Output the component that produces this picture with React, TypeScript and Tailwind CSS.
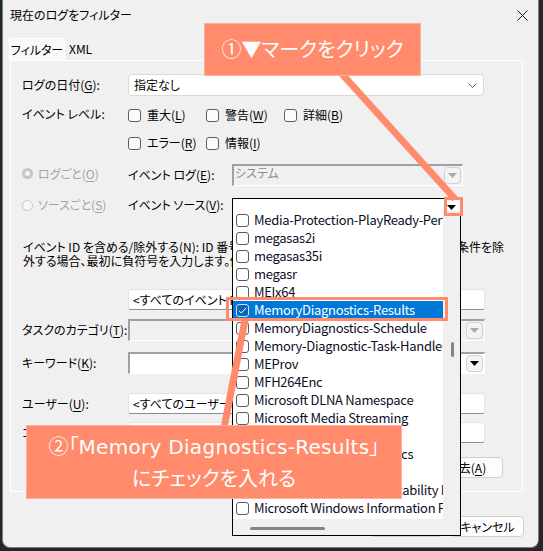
import React from "react";

const JP = "font-['Noto_Sans_CJK_JP',sans-serif] [font-feature-settings:'palt']";
const CALLOUT = "font-['Noto_Sans','Noto_Sans_CJK_JP',sans-serif] [font-feature-settings:'palt']";

function U({ c }: { c: string }) {
  return <span className="underline decoration-1 underline-offset-[2px]">{c}</span>;
}

function Box() {
  return <span className="block w-[13px] h-[13px] shrink-0 rounded-[3px] border border-[#5e5e5e] bg-[#fbfbfb]" />;
}

function Check({ t, k }: { t: string; k: string }) {
  return (
    <div className="w-[78px] flex items-center gap-[6px]">
      <Box />
      <span>
        {t}(<U c={k} />)
      </span>
    </div>
  );
}

function Tri({ color }: { color: string }) {
  return (
    <svg width="9" height="5" viewBox="0 0 9 5">
      <polygon points="0,0 9,0 4.5,5" fill={color} />
    </svg>
  );
}

function Sunken({ w, disabled, text }: { w: string; disabled?: boolean; text?: string }) {
  return (
    <div
      className={`h-[22px] ${w} flex items-center border-t-2 border-l-2 border-r border-b border-t-[#a0a0a0] border-l-[#a0a0a0] border-r-white border-b-white ${
        disabled ? "bg-[#f0f0f0]" : "bg-white"
      }`}
    >
      <span className="flex-1 pl-[1px] text-[#8c8c8c] leading-[14px] self-start">{text}</span>
      <span className="w-[17px] h-[17px] mr-[1px] rounded-[4px] border border-[#d2d2d2] bg-[#f3f3f3] flex items-center justify-center">
        <Tri color={disabled ? "#a8a8a8" : "#000000"} />
      </span>
    </div>
  );
}

function TextBox({ text }: { text: string }) {
  return (
    <div className="h-[21px] w-[357px] bg-white border border-[#e4e4e4] border-b-[#8d8d8d] rounded-[3px] flex items-center pl-[4px]">
      {text}
    </div>
  );
}

function Btn({ children, w }: { children: React.ReactNode; w: string }) {
  return (
    <div className={`h-[21px] ${w} rounded-[4px] border border-[#d0d0d0] bg-[#fdfdfd] flex items-center justify-center`}>
      {children}
    </div>
  );
}

const items = [
  "Media-Protection-PlayReady-Performance",
  "megasas2i",
  "megasas35i",
  "megasr",
  "MEIx64",
  "MemoryDiagnostics-Results",
  "MemoryDiagnostics-Schedule",
  "Memory-Diagnostic-Task-Handler",
  "MEProv",
  "MFH264Enc",
  "Microsoft DLNA Namespace",
  "Microsoft Media Streaming",
  "Microsoft Office 16",
  "Microsoft Office Diagnostics",
  "Microsoft Office Sessions",
  "Microsoft Windows Applicability Engine",
  "Microsoft Windows Information Protection",
];

export default function App() {
  return (
    <div className={`relative w-[543px] h-[551px] overflow-hidden bg-[#262626] text-[12px] text-black ${JP}`}>
      {/* window */}
      <div className="ml-[2px] w-[537px] h-[548px] bg-[#f0f0f0] border-l border-r border-b border-[#7c7c7c] rounded-b-[8px] flex flex-col">
        {/* title bar */}
        <div className="h-[30px] flex items-center justify-between">
          <span className="pl-[7px]">現在のログをフィルター</span>
          <span className="w-[32px] h-[30px] flex items-center justify-center">
            <svg width="11" height="11" viewBox="0 0 11 11">
              <path d="M0.5 0.5 L10.5 10.5 M10.5 0.5 L0.5 10.5" stroke="#1a1a1a" strokeWidth="1" />
            </svg>
          </span>
        </div>
        {/* tabs */}
        <div className="mt-[8px] pl-[6px] flex items-end h-[22px]">
          <div className="h-[22px] w-[56px] bg-[#f9f9f9] border-t border-l border-r border-white flex items-center justify-center">
            フィルター
          </div>
          <div className="h-[22px] pl-[4px] flex items-center">XML</div>
        </div>
        {/* panel */}
        <div className="ml-[7px] w-[513px] h-[432px] border border-white bg-[#f0f0f0] pl-[11px] pt-[13px] flex flex-col">
          {/* row A */}
          <div className="h-[22px] flex items-center">
            <span className="w-[106px]">
              ログの日付(<U c="G" />):
            </span>
            <div className="h-[22px] w-[356px] bg-white border border-[#dadada] rounded-[4px] flex items-center justify-between pl-[5px] pr-[6px]">
              <span>指定なし</span>
              <svg width="9" height="5" viewBox="0 0 9 5">
                <path d="M0.5 0.5 L4.5 4.5 L8.5 0.5" stroke="#606060" fill="none" strokeWidth="1" />
              </svg>
            </div>
          </div>
          {/* row B */}
          <div className="mt-[11px] h-[16px] flex items-center">
            <span className="w-[106px] -mt-[3px]">イベント レベル:</span>
            <Check t="重大" k="L" />
            <Check t="警告" k="W" />
            <Check t="詳細" k="B" />
          </div>
          {/* row C */}
          <div className="mt-[12px] h-[16px] flex items-center pl-[106px]">
            <Check t="エラー" k="R" />
            <Check t="情報" k="I" />
          </div>
          {/* row D */}
          <div className="mt-[13px] h-[22px] flex items-center">
            <div className="w-[106px] flex items-center gap-[5px] text-[#a3a3a3] -mt-[3px]">
              <span className="w-[11px] h-[11px] rounded-full bg-[#c4c4c4] flex items-center justify-center">
                <span className="w-[5px] h-[5px] rounded-full bg-[#f4f4f4]" />
              </span>
              <span>
                ログごと(<U c="O" />)
              </span>
            </div>
            <span className="w-[104px]">
              イベント ログ(<U c="E" />):
            </span>
            <Sunken w="w-[231px]" disabled text="システム" />
          </div>
          {/* row E */}
          <div className="mt-[10px] h-[18px] flex items-center">
            <div className="w-[106px] flex items-center gap-[5px] text-[#a3a3a3]">
              <span className="w-[11px] h-[11px] rounded-full border border-[#c4c4c4] bg-[#f7f7f7]" />
              <span>
                ソースごと(<U c="S" />)
              </span>
            </div>
            <span className="w-[104px]">
              イベント ソース(<U c="V" />):
            </span>
          </div>
          {/* row F description */}
          <div className="mt-[26px] w-[482px] pl-[1px] leading-[14px]">
            <div className="flex">
              <span className="flex-1 overflow-hidden whitespace-nowrap">
                イベント ID を含める/除外する(<U c="N" />): ID 番号や ID の範囲をコンマで区切って入力します。
              </span>
              <span>条件を除</span>
            </div>
            <div className="whitespace-nowrap">外する場合、最初に負符号を入力します。例: 1,3,5-99,-76</div>
          </div>
          {/* row G */}
          <div className="mt-[21px] pl-[106px]">
            <TextBox text="<すべてのイベント ID>" />
          </div>
          {/* row H */}
          <div className="mt-[9px] h-[22px] flex items-center">
            <span className="w-[106px]">
              タスクのカテゴリ(<U c="T" />):
            </span>
            <Sunken w="w-[357px]" disabled />
          </div>
          {/* row I */}
          <div className="mt-[11px] h-[22px] flex items-center">
            <span className="w-[106px]">
              キーワード(<U c="K" />):
            </span>
            <Sunken w="w-[357px]" />
          </div>
          {/* row J */}
          <div className="mt-[19px] h-[21px] flex items-center">
            <span className="w-[106px]">
              ユーザー(<U c="U" />):
            </span>
            <TextBox text="<すべてのユーザー>" />
          </div>
          {/* row K */}
          <div className="mt-[8px] h-[21px] flex items-center">
            <span className="w-[106px]">
              コンピューター(<U c="R" />):
            </span>
            <TextBox text="<すべてのコンピューター>" />
          </div>
          {/* row L */}
          <div className="mt-[14px] w-[481px] flex justify-end">
            <Btn w="w-[73px]">
              消去(<U c="A" />)
            </Btn>
          </div>
        </div>
        {/* bottom buttons */}
        <div className="mt-[24px] flex justify-end gap-[8px] pr-[14px]">
          <Btn w="w-[73px]">OK</Btn>
          <Btn w="w-[73px]">キャンセル</Btn>
        </div>
      </div>

      {/* open dropdown list */}
      <div className="absolute left-[232px] top-[198px] w-[229px] h-[338px] border border-black bg-[#f0f0f0] flex flex-col">
        <div className="h-[12px] bg-white flex justify-end">
          <span className="w-[17px] flex items-end justify-center pb-[1px]">
            <Tri color="#000000" />
          </span>
        </div>
        <div className="h-[308px] flex">
          <div className="w-[210px] bg-white overflow-hidden text-[13px] tracking-[-0.3px] text-[#0d0d1f]">
            {items.map((it, i) => {
              const sel = i === 5;
              return (
                <div
                  key={it}
                  className={`h-[18px] flex items-center gap-[5px] pl-[3px] whitespace-nowrap ${
                    sel ? "bg-[#0078d7] text-white" : ""
                  }`}
                >
                  {sel ? (
                    <span className="w-[13px] h-[13px] shrink-0 rounded-[3px] border border-[#cfe2f5] bg-[#0a64b8] flex items-center justify-center">
                      <svg width="9" height="7" viewBox="0 0 9 7">
                        <path d="M0.8 3.6 L3.3 6 L8.2 0.8" stroke="#ffffff" fill="none" strokeWidth="1" />
                      </svg>
                    </span>
                  ) : (
                    <span className="block w-[13px] h-[13px] shrink-0 rounded-[3px] border border-[#5a5a5a] bg-white" />
                  )}
                  <span>{it}</span>
                </div>
              );
            })}
          </div>
          <div className="flex-1 pt-[131px] pl-[8px]">
            <div className="w-[3px] h-[15px] rounded-full bg-[#858585]" />
          </div>
        </div>
        <div className="flex-1 pt-[8px] pl-[17px]">
          <div className="w-[75px] h-[3px] rounded-full bg-[#858585]" />
        </div>
      </div>

      {/* orange highlight boxes */}
      <div className="absolute left-[444px] top-[197px] w-[19px] h-[19px] border-[3px] border-[#ff8b6c]" />
      <div className="absolute left-[226px] top-[297px] w-[222px] h-[24px] border-[3px] border-[#ff8b6c]" />

      {/* connector lines */}
      <svg className="absolute left-0 top-0" width="543" height="551" viewBox="0 0 543 551">
        <line x1="342" y1="74" x2="455" y2="199" stroke="#ff8b6c" strokeWidth="7" />
        <line x1="245" y1="320" x2="224" y2="428" stroke="#ff8b6c" strokeWidth="7" />
      </svg>

      {/* callout 1 */}
      <div
        className={`absolute left-[204px] top-[23px] w-[217px] h-[53px] bg-[#ff8b6c] border border-[#ffb09b] flex items-center justify-center text-white text-[20px] ${CALLOUT}`}
      >
        ①▼マークをクリック
      </div>

      {/* callout 2 */}
      <div
        className={`absolute left-[26px] top-[425px] w-[376px] h-[74px] bg-[#ff8b6c] border border-[#ffb09b] flex flex-col items-center justify-center text-white text-[20px] leading-[31px] ${CALLOUT}`}
      >
        <span className="whitespace-nowrap">
          ②「<span className="font-['DejaVu_Sans',sans-serif] tracking-[0.3px]">Memory Diagnostics-Results</span>」
        </span>
        <span>にチェックを入れる</span>
      </div>
    </div>
  );
}
